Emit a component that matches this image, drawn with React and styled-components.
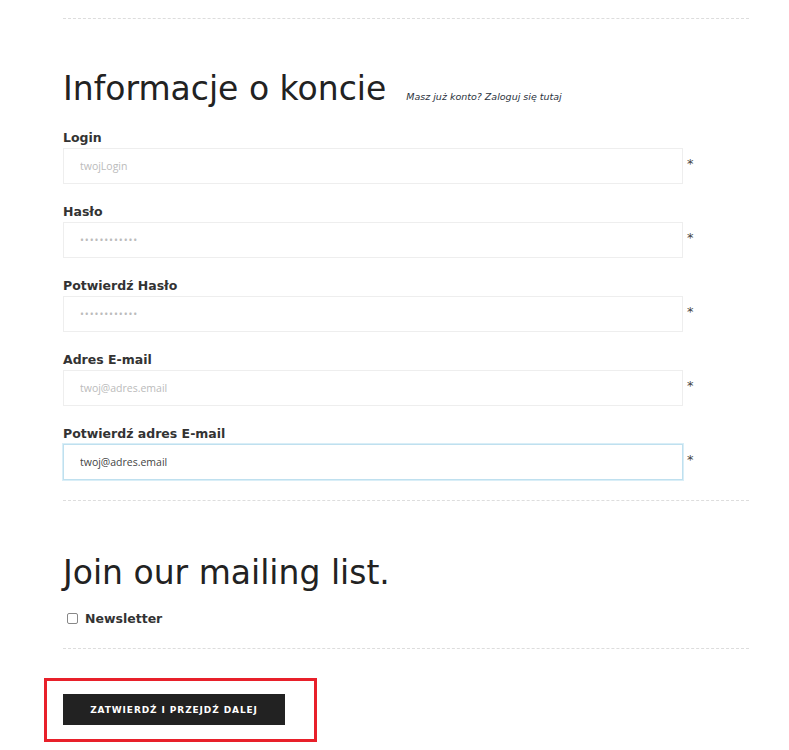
import React from 'react';
import styled, { createGlobalStyle } from 'styled-components';

const GlobalStyle = createGlobalStyle`
  body {
    margin: 0;
    background: #fff;
    font-family: "DejaVu Sans", Verdana, sans-serif;
    color: #222;
  }
`;

const Page = styled.div`
  width: 686px;
  padding: 18px 0 0 63px;
`;

const Divider = styled.hr`
  margin: 0;
  border: 0;
  border-top: 1px dashed #ddd;
`;

const Section = styled.section`
  padding: ${(p) => p.$pad || '0'};
`;

const TitleRow = styled.div`
  display: flex;
  align-items: baseline;
  gap: 20px;
  margin: 0 0 25px 0;
`;

const Title = styled.h2`
  margin: 0;
  font-size: 33px;
  font-weight: normal;
  color: #222;
  line-height: 1;
`;

const LoginHint = styled.a`
  font-size: 9.5px;
  font-style: italic;
  color: #2b3340;
  text-decoration: none;
`;

const Field = styled.div`
  margin-bottom: 20px;
`;

const Label = styled.label`
  display: block;
  font-size: 12.5px;
  font-weight: bold;
  color: #333;
  line-height: 16px;
  margin-bottom: 2px;
`;

const InputRow = styled.div`
  display: flex;
  align-items: center;
  gap: 4px;
`;

const Input = styled.input`
  box-sizing: border-box;
  width: 620px;
  height: 36px;
  padding: 0 16px;
  border: 1px solid ${(p) => (p.$focus ? '#bfe0ef' : '#eee')};
  box-shadow: ${(p) => (p.$focus ? '0 0 0 1px #d9eef7' : 'none')};
  font-family: "Open Sans", "DejaVu Sans", sans-serif;
  font-size: 10.5px;
  letter-spacing: ${(p) => (p.$dots ? '0.9px' : 'normal')};
  color: #444;
  outline: none;
  background: #fff;

  &::placeholder {
    color: #bbb;
  }
`;

const Required = styled.span`
  margin-bottom: 5px;
  font-size: 13px;
  color: #444;
`;

const CheckRow = styled.label`
  display: flex;
  align-items: center;
  gap: 7px;
  margin-top: ${(p) => p.$offset || 0}px;
  padding-left: 4px;
  font-size: 12.5px;
  font-weight: bold;
  color: #333;
`;

const Box = styled.span`
  width: 9px;
  height: 9px;
  border: 1px solid #888;
  border-radius: 2px;
  background: #fff;
`;

const Highlight = styled.div`
  display: inline-block;
  margin: 29px 0 0 -19px;
  padding: 13px 29px 14px 16px;
  border: 3px solid #e8202a;
`;

const SubmitButton = styled.button`
  width: 222px;
  height: 31px;
  border: 0;
  background: #222;
  color: #fff;
  font-family: "DejaVu Sans", Verdana, sans-serif;
  font-size: 9px;
  font-weight: bold;
  letter-spacing: 0.9px;
  text-transform: uppercase;
  cursor: pointer;
`;

const fields = [
  { label: 'Login', placeholder: 'twojLogin' },
  { label: 'Hasło', placeholder: '••••••••••••', dots: true },
  { label: 'Potwierdź Hasło', placeholder: '••••••••••••', dots: true },
  { label: 'Adres E-mail', placeholder: 'twoj@adres.email' },
  { label: 'Potwierdź adres E-mail', value: 'twoj@adres.email', focus: true },
];

const App = () => {
  return (
    <Page>
      <GlobalStyle />
      <Divider />

      <Section $pad="53px 0 0 0">
        <TitleRow>
          <Title>Informacje o koncie</Title>
          <LoginHint href="#">Masz już konto? Zaloguj się tutaj</LoginHint>
        </TitleRow>

        {fields.map((f) => (
          <Field key={f.label}>
            <Label>{f.label}</Label>
            <InputRow>
              <Input
                placeholder={f.placeholder}
                defaultValue={f.value}
                $focus={f.focus}
                $dots={f.dots}
                readOnly
              />
              <Required>*</Required>
            </InputRow>
          </Field>
        ))}
      </Section>

      <Divider />

      <Section $pad="55px 0 22px 0">
        <Title>Join our mailing list.</Title>
        <CheckRow $offset={22}>
          <Box />
          Newsletter
        </CheckRow>
      </Section>

      <Divider />

      <Highlight>
        <SubmitButton>Zatwierdź i przejdź dalej</SubmitButton>
      </Highlight>
    </Page>
  );
};

export default App;
